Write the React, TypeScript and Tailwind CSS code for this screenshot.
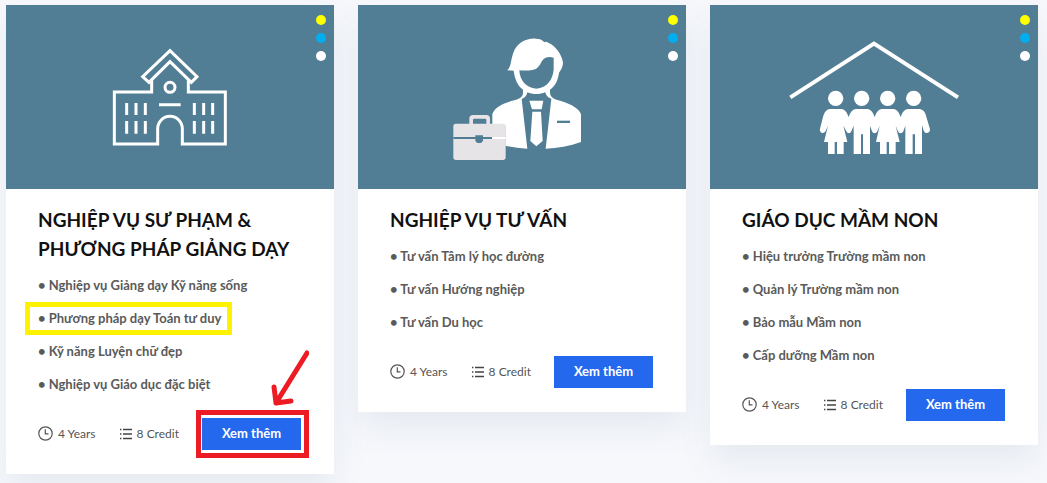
import React from "react";

interface Course {
  title: string;
  items: string[];
  cover: React.ReactNode;
  // index of the list item with a marker frame round it
  markedItem?: number;
  markedButton?: boolean;
}

const SchoolCover = () => (
  <svg viewBox="-282 -90 984 552" className="h-full w-full" fill="none" stroke="#fff" aria-hidden="true">
    <g strokeWidth="9">
      <path d="M155 136V171H43V327H173V281A37 37 0 0 1 247 281V327H376V171H265V136" />
      <path d="M210 47L291 125L274 142L210 80L147 142L128 125Z" />
      <circle cx="210" cy="157" r="15" />
    </g>
    <path
      strokeWidth="9"
      d="M177 209H242M80 204V240M108 204V240M136 204V240M80 258V296M108 258V296M136 258V296M283 204V240M311 204V240M338 204V240M283 258V296M311 258V296M338 258V296"
    />
  </svg>
);

const ConsultantCover = () => (
  <svg viewBox="-261 -75 984 552" className="h-full w-full" aria-hidden="true">
    {/* head */}
    <path
      fill="#fff"
      fillRule="evenodd"
      d="M187 121C199 109 197 90 205 68C216 39 244 24 272 26C284 26 292 29 298 37C300 34 305 35 310 38C334 49 351 75 354 98C354 110 348 119 342 128C339 151 331 167 315 179V189C317 202 325 206 337 210C366 218 400 231 408 252V336C375 348 336 355 302 356L319 206C310 203 304 199 301 187C284 194 263 194 247 187C244 200 238 204 230 207L247 356C222 355 200 352 181 347V288H142V252C151 229 181 218 208 211C222 207 232 203 234 190V179C217 167 209 145 206 122ZM223 121C224 149 242 174 274 176C306 174 324 149 326 118V83C313 79 298 80 291 93C284 106 278 118 262 120C250 122 237 122 223 121Z"
    />
    {/* tie */}
    <path fill="#fff" d="M253 212H295L290 238H261ZM262 245H288L293 333L274 349L256 333Z" />
    <path fill="#527e95" d="M336 272H375V279H336Z" />
    {/* briefcase */}
    <path
      fill="#e6e4e6"
      fillRule="evenodd"
      d="M73 281V266Q73 255 84 255H124Q135 255 135 266V281H175Q182 281 182 289V382Q182 390 174 390H33Q25 390 25 382V289Q25 281 32 281ZM84 281H124V270Q124 266 120 266H88Q84 266 84 270Z"
    />
    <path fill="#527e95" d="M25 321H91V316H114V321H141V327H114V333L108 339H97L91 333V327H25Z" />
    <path fill="#fff" d="M141 321H182V327H141Z" />
  </svg>
);

const FamilyCover = () => (
  <svg viewBox="-210 -90 984 552" className="h-full w-full" fill="#fff" aria-hidden="true">
    <path fill="none" stroke="#fff" strokeWidth="12" d="M31 187L282 26L534 187" />
    <circle cx="167" cy="190" r="23" />
    <circle cx="245" cy="190" r="23" />
    <circle cx="323" cy="190" r="23" />
    <circle cx="401" cy="190" r="23" />
    <path d="M150 222H184C195 223 201 232 206 247C211 232 217 223 228 222H262C273 223 279 232 284 247C289 232 295 223 306 222H340C351 223 357 232 362 247C367 232 373 223 384 222H418C429 223 435 231 438 242L450 283C451 295 436 298 431 287L426 270V357H405V298H398V357H376V272L370 289C366 297 357 296 354 289L347 272L359 321H347V357H327V321H320V357H300V321H288L299 272L292 289C289 296 279 297 276 289L270 272V357H249V298H243V357H221V272L214 289C211 297 202 296 199 289L190 272L202 321H191V357H171V321H164V357H144V321H132L144 272L137 288C131 299 117 293 120 281L130 242C134 230 140 223 150 222Z" />
  </svg>
);

const ClockIcon = () => (
  <svg viewBox="0 0 16 16" className="size-4 shrink-0" fill="none" stroke="#555" aria-hidden="true">
    <circle cx="7.5" cy="7.5" r="6.7" strokeWidth="1.2" />
    <path d="M7.3 3.2V7.8H10.5" strokeWidth="1.2" />
  </svg>
);

const ListIcon = () => (
  <svg viewBox="0 0 14 12" className="h-3 w-3.5 shrink-0" stroke="#444" strokeWidth="1.3" aria-hidden="true">
    <path d="M4 1.5H13M4 6H13M4 10.5H13M1 1.5H2.4M1 6H2.4M1 10.5H2.4" />
  </svg>
);

const courses: Course[] = [
  {
    title: "NGHIỆP VỤ SƯ PHẠM & PHƯƠNG PHÁP GIẢNG DẠY",
    items: [
      "Nghiệp vụ Giảng dạy Kỹ năng sống",
      "Phương pháp dạy Toán tư duy",
      "Kỹ năng Luyện chữ đẹp",
      "Nghiệp vụ Giáo dục đặc biệt",
    ],
    cover: <SchoolCover />,
    markedItem: 1,
    markedButton: true,
  },
  {
    title: "NGHIỆP VỤ TƯ VẤN",
    items: ["Tư vấn Tâm lý học đường", "Tư vấn Hướng nghiệp", "Tư vấn Du học"],
    cover: <ConsultantCover />,
  },
  {
    title: "GIÁO DỤC MẦM NON",
    items: [
      "Hiệu trưởng Trường mầm non",
      "Quản lý Trường mầm non",
      "Bảo mẫu Mầm non",
      "Cấp dưỡng Mầm non",
    ],
    cover: <FamilyCover />,
  },
];

const CourseCard = ({ course }: { course: Course }) => (
  <article className="bg-white shadow-[0_16px_32px_rgba(60,100,120,0.09)]">
    <div className="relative h-[184px] bg-[#527e95]">
      {course.cover}
      <div className="absolute top-2.5 right-2 flex flex-col gap-2">
        <span className="size-2.5 rounded-full bg-[#ffff00]" />
        <span className="size-2.5 rounded-full bg-[#00aeef]" />
        <span className="size-2.5 rounded-full bg-white" />
      </div>
    </div>

    <div className="pt-4 pr-[33px] pb-6 pl-8">
      <h3 className="text-[19px] leading-[29px] font-bold text-[#111]">{course.title}</h3>

      <ul className="mt-1.5 text-[13px] leading-[33px] font-bold text-[#5a5a5a]">
        {course.items.map((item, i) => (
          <li key={item} className="relative">
            • {item}
            {course.markedItem === i && (
              <span className="absolute inset-y-0 -left-[13px] w-[207px] border-5 border-[#fff200]" />
            )}
          </li>
        ))}
      </ul>

      <div className="mt-[17px] flex items-center justify-between text-[12px] text-[#555]">
        <span className="flex items-center gap-1">
          <ClockIcon />4 Years
        </span>
        <span className="flex items-center gap-1">
          <ListIcon />8 Credit
        </span>
        <div className="relative">
          <button type="button" className="block h-8 w-[99px] bg-[#2468ee] text-[13px] font-bold text-white">
            Xem thêm
          </button>
          {course.markedButton && (
            <>
              <span className="pointer-events-none absolute -top-2 -right-2 -bottom-2 -left-1.5 border-5 border-[#ed1c24]" />
              <svg
                viewBox="0 0 40 56"
                className="pointer-events-none absolute -right-2 bottom-11 h-14 w-10"
                fill="none"
                stroke="#ed1c24"
                strokeWidth="5"
                strokeLinecap="round"
                strokeLinejoin="round"
                aria-hidden="true"
              >
                <path d="M38 3L7 53M5 37L7 53L22 51" />
              </svg>
            </>
          )}
        </div>
      </div>
    </div>
  </article>
);

const App = () => {
  return (
    <main className="min-h-screen bg-[#f7f8fc] pt-[5px] pr-[9px] pl-1.5 font-['Lato','Noto_Sans',sans-serif]">
      <div className="grid grid-cols-3 items-start gap-6">
        {courses.map((course) => (
          <CourseCard key={course.title} course={course} />
        ))}
      </div>
    </main>
  );
};

export default App;
